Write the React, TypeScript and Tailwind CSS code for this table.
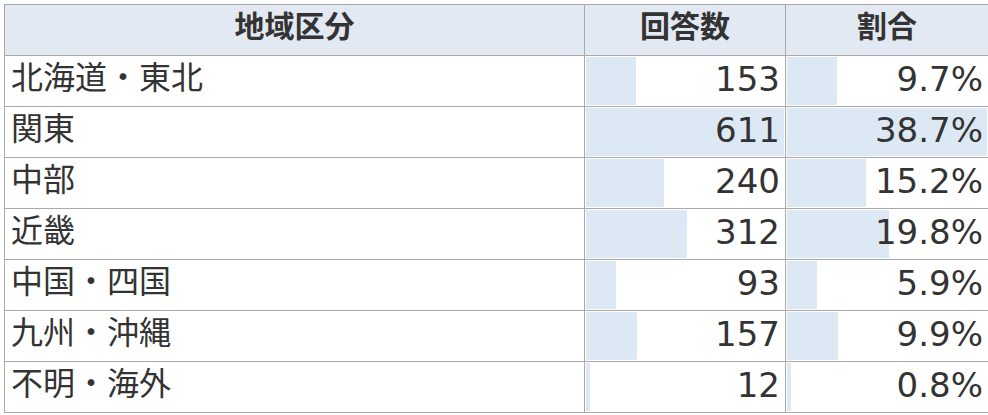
import React from 'react';

interface RegionRow {
  region: string;
  count: number;
  ratio: number;
}

const rows: RegionRow[] = [
  { region: '北海道・東北', count: 153, ratio: 9.7 },
  { region: '関東', count: 611, ratio: 38.7 },
  { region: '中部', count: 240, ratio: 15.2 },
  { region: '近畿', count: 312, ratio: 19.8 },
  { region: '中国・四国', count: 93, ratio: 5.9 },
  { region: '九州・沖縄', count: 157, ratio: 9.9 },
  { region: '不明・海外', count: 12, ratio: 0.8 },
];

const maxCount = Math.max(...rows.map(r => r.count));
const maxRatio = Math.max(...rows.map(r => r.ratio));

// cell with a light bar drawn behind the value
function BarCell({ value, max, label }: { value: number; max: number; label: string }) {
  return (
    <td className="relative border border-[#a9a9a9] p-0 pb-[5px] text-right text-[34px]">
      <div
        className="absolute left-px top-px bottom-px bg-[#dce9f5]"
        style={{ width: `calc((100% - 2px) * ${value / max})` }}
      />
      <span className="relative pr-[5px]">{label}</span>
    </td>
  );
}

export default function App() {
  return (
    <div className="bg-white pl-[4px] pt-[4px] w-[988px] h-[415px] overflow-hidden">
      <table
        className="table-fixed border-collapse w-[984px] text-[32px] leading-none text-[#333]"
        style={{ fontFamily: '"DejaVu Sans", "Noto Sans CJK JP", sans-serif' }}
      >
        <colgroup>
          <col className="w-[580px]" />
          <col className="w-[201px]" />
          <col className="w-[203px]" />
        </colgroup>
        <thead>
          <tr className="h-[51px] bg-[#e3e9f3]">
            <th className="border border-[#a9a9a9] p-0 pb-[6px] text-center font-bold text-[30px]">地域区分</th>
            <th className="border border-[#a9a9a9] p-0 pb-[6px] text-center font-bold text-[30px]">回答数</th>
            <th className="border border-[#a9a9a9] p-0 pb-[6px] text-center font-bold text-[30px]">割合</th>
          </tr>
        </thead>
        <tbody>
          {rows.map(row => (
            <tr key={row.region} className="h-[51px]">
              <td className="border border-[#a9a9a9] p-0 pb-[6px] pl-[6px] text-left">{row.region}</td>
              <BarCell value={row.count} max={maxCount} label={String(row.count)} />
              <BarCell value={row.ratio} max={maxRatio} label={`${row.ratio.toFixed(1)}%`} />
            </tr>
          ))}
        </tbody>
      </table>
    </div>
  );
}
